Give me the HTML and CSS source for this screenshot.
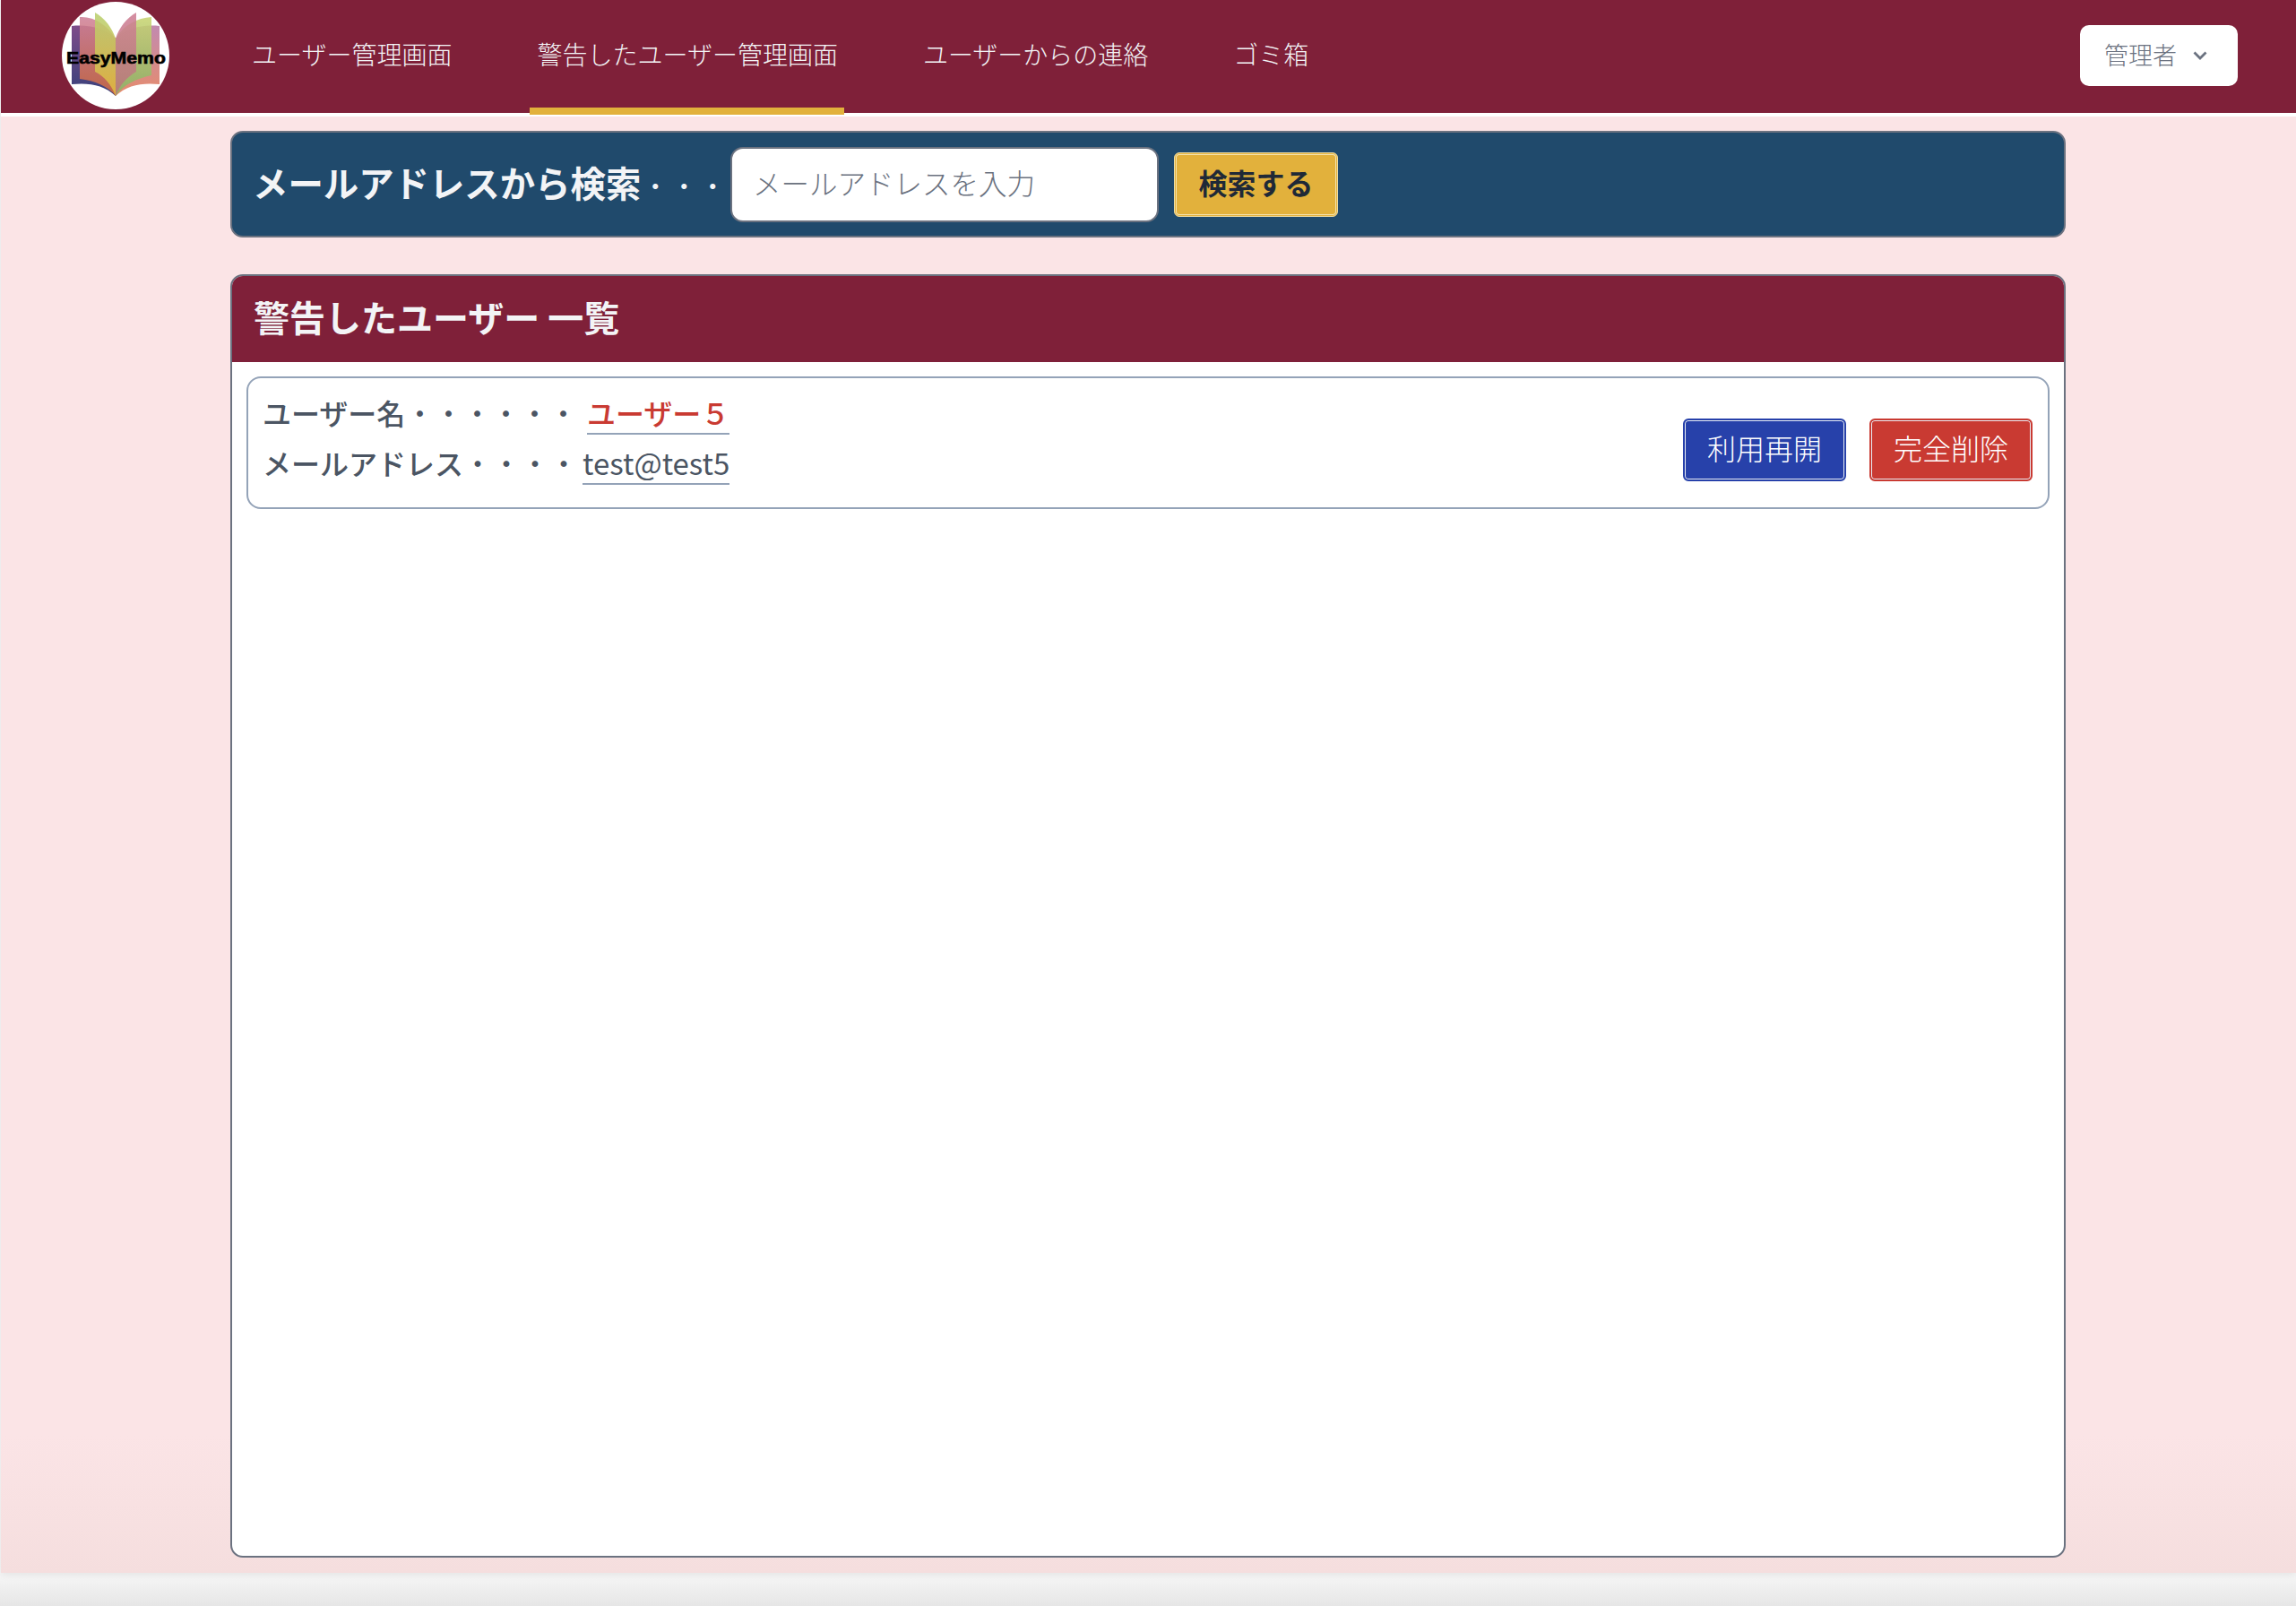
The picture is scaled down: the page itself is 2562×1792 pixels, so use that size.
FILE: index.html
```html
<!DOCTYPE html>
<html lang="ja">
<head>
<meta charset="utf-8">
<title>警告したユーザー管理画面</title>
<link rel="stylesheet" href="styles.css">
</head>
<body>
<div class="page">
  <header class="header">
    <div class="logo">
      <svg class="logo-svg" viewBox="69 2 120 120" width="120" height="120" aria-label="EasyMemo">
        <defs>
          <linearGradient id="g1" x1="0" y1="0" x2="0" y2="1"><stop offset="0" stop-color="#7d4c8a"/><stop offset="1" stop-color="#37407a"/></linearGradient>
          <linearGradient id="g2" x1="0" y1="0" x2="0" y2="1"><stop offset="0" stop-color="#cf8299"/><stop offset="1" stop-color="#d26b3f"/></linearGradient>
          <linearGradient id="g3" x1="0" y1="0" x2="0" y2="1"><stop offset="0" stop-color="#b9d070"/><stop offset="1" stop-color="#e3b83f"/></linearGradient>
          <linearGradient id="g4" x1="0" y1="0" x2="0" y2="1"><stop offset="0" stop-color="#c28ab0"/><stop offset="1" stop-color="#e68c6c"/></linearGradient>
          <linearGradient id="g5" x1="0" y1="0" x2="0" y2="1"><stop offset="0" stop-color="#c8d472"/><stop offset="1" stop-color="#87b368"/></linearGradient>
          <linearGradient id="g6" x1="0" y1="0" x2="0" y2="1"><stop offset="0" stop-color="#cf7f96"/><stop offset="1" stop-color="#b87a78"/></linearGradient>
        </defs>
        <circle cx="129" cy="62" r="60" fill="#fff"/>
        <path d="M129 107C116 95 100 92 80 94V29C100 27 118 32 129 43Z" fill="url(#g1)"/>
        <path d="M129 107C142 95 158 92 178 94V29C158 27 140 32 129 43Z" fill="url(#g4)"/>
        <path class="logo-page" d="M129 107C120 96 106 90 89 88V19C105 18 120 28 129 43Z" fill="url(#g2)"/>
        <path class="logo-page" d="M129 107C138 94 152 88 169 84V19C153 20 138 28 129 43Z" fill="url(#g5)"/>
        <path class="logo-page" d="M129 107C124 94 116 85 106 80V14C117 20 125 31 129 43Z" fill="url(#g3)"/>
        <path class="logo-page" d="M129 107C134 94 142 86 152 80V14C141 20 133 31 129 43Z" fill="url(#g6)"/>
        <text class="logo-text" x="74" y="71" textLength="111" lengthAdjust="spacingAndGlyphs">EasyMemo</text>
      </svg>
    </div>
    <nav class="nav">
      <a class="nav-link">ユーザー管理画面</a>
      <a class="nav-link nav-link-active">警告したユーザー管理画面</a>
      <a class="nav-link">ユーザーからの連絡</a>
      <a class="nav-link">ゴミ箱</a>
    </nav>
    <button class="user-menu" type="button">
      <span>管理者</span>
      <svg class="chevron" viewBox="0 0 16 10" width="16" height="10"><path d="M1.5 1.5 8 8l6.5-6.5" fill="none" stroke="#6b7280" stroke-width="2.8"/></svg>
    </button>
  </header>
  <main class="main">
    <section class="search-panel">
      <h2 class="search-title">メールアドレスから検索<span class="dots">・・・</span></h2>
      <input class="search-input" type="text" placeholder="メールアドレスを入力">
      <button class="btn-search" type="button">検索する</button>
    </section>
    <section class="list-panel">
      <h2 class="list-title">警告したユーザー 一覧</h2>
      <div class="list-body">
        <article class="user-card">
          <dl class="user-info">
            <dt class="info-label">ユーザー名<span class="dots-thin">・・・・・・</span></dt>
            <dd class="info-value info-name">ユーザー５</dd>
            <dt class="info-label">メールアドレス<span class="dots-thin">・・・・</span></dt>
            <dd class="info-value info-mail">test@test5</dd>
          </dl>
          <div class="actions">
            <button class="btn btn-blue" type="button">利用再開</button>
            <button class="btn btn-red" type="button">完全削除</button>
          </div>
        </article>
      </div>
    </section>
  </main>
</div>
</body>
</html>
```
FILE: styles.css
```css
* { box-sizing: border-box; }
html, body { height: 100%; }
body {
  margin: 0;
  background: linear-gradient(#f6f6f6 1756px, #e6e6e6 100%);
  font-family: "Noto Sans CJK JP", "Noto Sans", sans-serif;
  overflow: hidden;
}
button, input { font-family: inherit; }
.page {
  height: 1755px;
  margin-left: 1px;
  display: flex;
  flex-direction: column;
  background: linear-gradient(#fbe4e6 0, #fbe4e6 1600px, #f5dede 100%);
  box-shadow: 0 2px 8px rgba(0, 0, 0, .08);
}
.header {
  height: 130px;
  flex: none;
  display: flex;
  align-items: stretch;
  background: #7f2039;
  border-bottom: 4px solid #fff;
  padding: 0 65px 0 68px;
}
.logo { display: flex; align-items: center; width: 120px; margin-top: -2px; flex: none; }
.logo-svg { display: block; }
.logo-page { opacity: .88; }
.logo-text { font-family: "Liberation Sans", sans-serif; font-weight: 700; font-size: 19px; fill: #000; stroke: #000; stroke-width: .6px; }
.nav { display: flex; flex: 1; margin-left: 92px; gap: 95px; }
.nav-link {
  position: relative;
  display: flex;
  align-items: center;
  padding: 0 0 7px;
  color: #f3f4f6;
  font-size: 28px;
  font-weight: 300;
  white-space: nowrap;
}
.nav-link-active::after {
  content: "";
  position: absolute;
  left: -8px;
  right: -7px;
  bottom: -2px;
  height: 8px;
  background: #e2b13c;
}
.user-menu {
  align-self: flex-start;
  margin-top: 28px;
  width: 176px;
  height: 68px;
  display: flex;
  align-items: center;
  gap: 18px;
  padding: 0 0 3px 27px;
  border: 0;
  border-radius: 10px;
  background: #fff;
  color: #6b7280;
  font-size: 27px;
  font-weight: 300;
}
.chevron { flex: none; margin-top: 2px; }
.main {
  flex: 1;
  min-height: 0;
  display: flex;
  flex-direction: column;
  gap: 41px;
  padding: 16px 257px 17px 256px;
}
.search-panel {
  height: 119px;
  flex: none;
  display: flex;
  align-items: center;
  padding: 0 0 0 23px;
  background: #204a6c;
  border: 2px solid #6b7280;
  border-radius: 14px;
}
.search-title {
  margin: 0;
  padding-bottom: 7px;
  color: #f3f4f6;
  font-size: 39.4px;
  font-weight: 700;
  white-space: nowrap;
  width: 533px;
  flex: none;
}
.dots { font-size: 32px; font-weight: 300; }
.search-input {
  width: 478px;
  height: 84px;
  padding: 0 23px 6px;
  border: 2px solid #6b7280;
  border-radius: 14px;
  background: #fff;
  font-size: 31.5px;
  font-weight: 300;
  color: #374151;
  outline: 0;
}
.search-input::placeholder { color: #6b7280; opacity: 1; }
.btn-search {
  width: 183px;
  height: 72px;
  margin-left: 17px;
  border: 1px solid #f0dca0;
  border-radius: 6px;
  background: #e2b13c;
  box-shadow: inset 0 0 0 1px #e2b13c, inset 0 0 0 2px #f4e3b0;
  color: #1f2937;
  font-size: 32px;
  font-weight: 700;
  padding: 0 0 6px;
}
.list-panel {
  flex: 1;
  min-height: 0;
  display: flex;
  flex-direction: column;
  background: #fff;
  border: 2px solid #6b7280;
  border-radius: 14px;
  overflow: hidden;
}
.list-title {
  margin: 0;
  height: 96px;
  flex: none;
  display: flex;
  align-items: center;
  padding: 0 0 6px 24px;
  background: #7f2039;
  color: #f3f4f6;
  font-size: 40px;
  font-weight: 700;
  white-space: pre;
}
.list-body { padding: 16px 16px 0; }
.user-card {
  height: 148px;
  display: flex;
  align-items: center;
  justify-content: space-between;
  padding: 0 17px 0 16px;
  border: 2px solid #94a3b8;
  border-radius: 16px;
}
.user-info {
  margin: 0 0 12px;
  display: grid;
  grid-template-columns: auto auto;
  row-gap: 7px;
  column-gap: 5px;
  color: #4b5563;
  font-size: 32px;
  line-height: 48px;
}
.info-label { font-weight: 500; white-space: nowrap; }
.dots-thin { font-weight: 400; }
.info-value {
  margin: 0;
  justify-self: end;
  height: 49px;
  border-bottom: 2px solid #94a3b8;
  font-weight: 400;
  white-space: nowrap;
}
.info-name { color: #c93a32; font-weight: 500; }
.info-mail { font-size: 33px; }
.actions { display: flex; gap: 26px; margin-top: 16px; }
.btn {
  width: 182px;
  height: 70px;
  padding: 0 0 6px;
  border-width: 2px;
  border-style: solid;
  border-radius: 6px;
  color: #fff;
  font-size: 32px;
  font-weight: 300;
  box-shadow: inset 0 0 0 1px #e8ecf4;
}
.btn-blue { background: #2741aa; border-color: #2741aa; }
.btn-red { background: #c93a32; border-color: #c93a32; }
```
